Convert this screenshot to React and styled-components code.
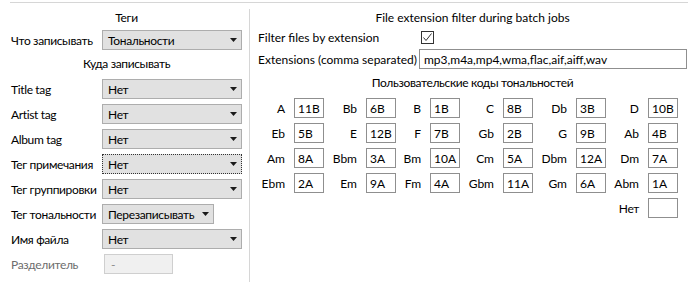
import React from 'react'
import styled, { createGlobalStyle } from 'styled-components'

const GlobalStyle = createGlobalStyle`
  html, body {
    margin: 0;
    padding: 0;
    background: #fff;
  }
  body {
    font-family: Lato, "Liberation Sans", Arial, sans-serif;
    font-size: 12px;
    color: #000;
  }
`

const tagRows = [
  { label: 'Title tag', value: 'Нет' },
  { label: 'Artist tag', value: 'Нет' },
  { label: 'Album tag', value: 'Нет' },
  { label: 'Тег примечания', value: 'Нет', focused: true },
  { label: 'Тег группировки', value: 'Нет' },
  { label: 'Тег тональности', value: 'Перезаписывать', width: 112 },
  { label: 'Имя файла', value: 'Нет' }
]

// key name / code pairs, row by row
const keyCodes = [
  ['A', '11B'], ['Bb', '6B'], ['B', '1B'], ['C', '8B'], ['Db', '3B'], ['D', '10B'],
  ['Eb', '5B'], ['E', '12B'], ['F', '7B'], ['Gb', '2B'], ['G', '9B'], ['Ab', '4B'],
  ['Am', '8A'], ['Bbm', '3A'], ['Bm', '10A'], ['Cm', '5A'], ['Dbm', '12A'], ['Dm', '7A'],
  ['Ebm', '2A'], ['Em', '9A'], ['Fm', '4A'], ['Gbm', '11A'], ['Gm', '6A'], ['Abm', '1A']
]

const Arrow = () => (
  <svg width="7" height="4" viewBox="0 0 7 4">
    <polygon points="0,0 7,0 3.5,4" fill="#1a1a1a" />
  </svg>
)

const Check = () => (
  <svg width="11" height="11" viewBox="0 0 11 11">
    <polyline points="1.5,5.5 4,8.5 9.5,1.5" fill="none" stroke="#333" strokeWidth="1" />
  </svg>
)

const App = () => (
  <Page>
    <GlobalStyle />
    <TopRule />
    <Columns>
      <LeftPanel>
        <SectionTitle $top={4} $bottom={3}><Ru>Теги</Ru></SectionTitle>
        <FieldRow>
          <FieldLabel><Ru>Что записывать</Ru></FieldLabel>
          <Select>
            <Ru>Тональности</Ru>
            <Arrow />
          </Select>
        </FieldRow>
        <SectionTitle $top={3} $bottom={6}><Ru>Куда записывать</Ru></SectionTitle>
        <RowList>
          {tagRows.map((row) => (
            <FieldRow key={row.label}>
              <FieldLabel><Ru>{row.label}</Ru></FieldLabel>
              <Select $width={row.width} $focused={row.focused}>
                <Ru>{row.value}</Ru>
                <Arrow />
              </Select>
            </FieldRow>
          ))}
          <FieldRow>
            <FieldLabel $disabled><Ru>Разделитель</Ru></FieldLabel>
            <DisabledInput>-</DisabledInput>
          </FieldRow>
        </RowList>
      </LeftPanel>

      <RightPanel>
        <PanelTitle>File extension filter during batch jobs</PanelTitle>
        <FormRow>
          <FormLabel>Filter files by extension</FormLabel>
          <Checkbox>
            <Check />
          </Checkbox>
        </FormRow>
        <FormRow>
          <FormLabel>Extensions (comma separated)</FormLabel>
          <TextInput>mp3,m4a,mp4,wma,flac,aif,aiff,wav</TextInput>
        </FormRow>
        <PanelTitle $top={1} $height={20}><Ru>Пользовательские коды тональностей</Ru></PanelTitle>
        <KeyGrid>
          {keyCodes.map(([name, code]) => (
            <React.Fragment key={name}>
              <KeyLabel>{name}</KeyLabel>
              <KeyBox>{code}</KeyBox>
            </React.Fragment>
          ))}
          <KeyLabel $column={11}><Ru>Нет</Ru></KeyLabel>
          <KeyBox />
        </KeyGrid>
      </RightPanel>
    </Columns>
  </Page>
)

const Page = styled.div`
  width: 690px;
  height: 282px;
  overflow: hidden;
  display: flex;
  flex-direction: column;
`

// Cyrillic glyphs in Lato run a little wider than the original UI font
const Ru = styled.span`
  letter-spacing: -0.35px;
`

const TopRule = styled.div`
  margin: 2px 2px 0 10px;
  border-top: 1px solid #d6d6d6;
`

const Columns = styled.div`
  flex: 1;
  display: flex;
`

const LeftPanel = styled.div`
  width: 249px;
  box-sizing: border-box;
  padding: 0 7px 0 11px;
  display: flex;
  flex-direction: column;
`

const SectionTitle = styled.div`
  height: 20px;
  margin-top: ${(p) => p.$top || 0}px;
  margin-bottom: ${(p) => p.$bottom || 0}px;
  display: flex;
  align-items: center;
  justify-content: center;
`

const RowList = styled.div`
  display: flex;
  flex-direction: column;
  gap: 5px;
`

const FieldRow = styled.div`
  height: 20px;
  display: flex;
  align-items: center;
`

const FieldLabel = styled.div`
  width: 91px;
  flex-shrink: 0;
  white-space: nowrap;
  color: ${(p) => (p.$disabled ? '#6d6d6d' : '#000')};
`

const Select = styled.div`
  width: ${(p) => p.$width || 140}px;
  height: 20px;
  box-sizing: border-box;
  padding: 0 4px 0 5px;
  background: #e1e1e1;
  border: 1px ${(p) => (p.$focused ? 'dotted #333' : 'solid #adadad')};
  display: flex;
  align-items: center;
  justify-content: space-between;
`

const DisabledInput = styled.div`
  width: 69px;
  height: 20px;
  box-sizing: border-box;
  margin-left: 2px;
  padding-left: 6px;
  background: #f0f0f0;
  border: 1px solid #cfcfcf;
  color: #8a8a8a;
  display: flex;
  align-items: center;
`

const RightPanel = styled.div`
  flex: 1;
  margin-top: 6px;
  border-left: 1px solid #d6d6d6;
  padding: 0 3px 0 8px;
  display: flex;
  flex-direction: column;
`

const PanelTitle = styled.div`
  height: ${(p) => p.$height || 16}px;
  margin-top: ${(p) => p.$top || 0}px;
  margin-bottom: 2px;
  display: flex;
  align-items: center;
  justify-content: center;
`

const FormRow = styled.div`
  height: 20px;
  margin-bottom: 2px;
  display: flex;
  align-items: center;
`

const FormLabel = styled.div`
  width: 161px;
  flex-shrink: 0;
  white-space: nowrap;
`

const Checkbox = styled.div`
  width: 13px;
  height: 13px;
  box-sizing: border-box;
  margin-left: 2px;
  border: 1px solid #333;
  background: #fff;
  display: flex;
  align-items: center;
  justify-content: center;
`

const TextInput = styled.div`
  flex: 1;
  height: 20px;
  box-sizing: border-box;
  padding-left: 4px;
  border: 1px solid #8f8f8f;
  display: flex;
  align-items: center;
  white-space: nowrap;
`

const KeyGrid = styled.div`
  margin: 4px 0 0 4px;
  display: grid;
  grid-template-columns: 32px 30px 42px 30px 34px 30px 43px 30px 43px 30px 42px 30px;
  grid-auto-rows: 20px;
  row-gap: 5px;
`

const KeyLabel = styled.div`
  grid-column: ${(p) => p.$column || 'auto'};
  padding-right: 9px;
  display: flex;
  align-items: center;
  justify-content: flex-end;
  white-space: nowrap;
`

const KeyBox = styled.div`
  box-sizing: border-box;
  padding-left: 3px;
  border: 1px solid #8f8f8f;
  display: flex;
  align-items: center;
`

export default App
